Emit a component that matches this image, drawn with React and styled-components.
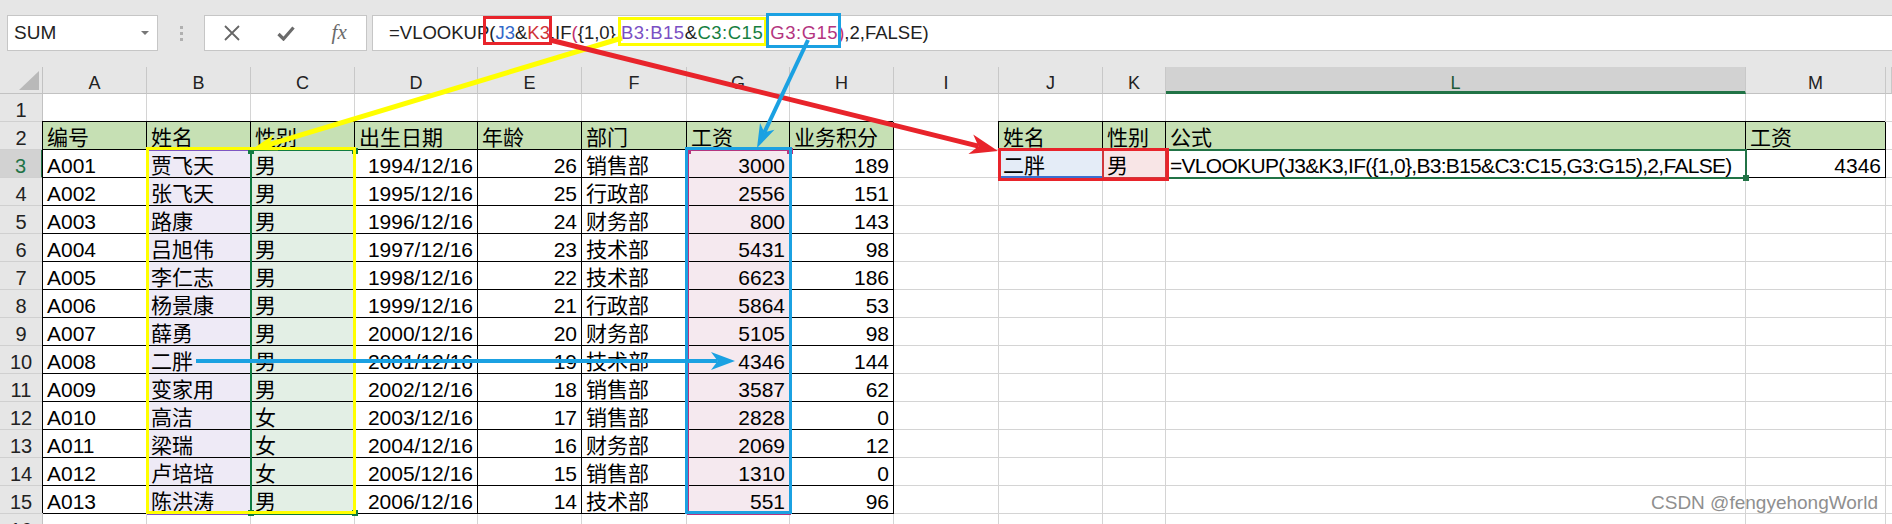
import React from 'react';
import styled, { createGlobalStyle } from 'styled-components';

const GlobalStyle = createGlobalStyle`
  html, body { margin: 0; padding: 0; background: #fff; }
  body {
    width: 1892px; height: 524px; overflow: hidden;
    font-family: "Liberation Sans", "Noto Sans CJK SC", sans-serif;
  }
`;

const COLS = [43, 104, 104, 104, 123, 104, 105, 103, 104, 105, 104, 63, 580, 140, 6];
const LETTERS = ['', 'A', 'B', 'C', 'D', 'E', 'F', 'G', 'H', 'I', 'J', 'K', 'L', 'M', ''];

const HEAD = ['编号', '姓名', '性别', '出生日期', '年龄', '部门', '工资', '业务积分'];
const DATA = [
  ['A001', '贾飞天', '男', '1994/12/16', 26, '销售部', 3000, 189],
  ['A002', '张飞天', '男', '1995/12/16', 25, '行政部', 2556, 151],
  ['A003', '路康', '男', '1996/12/16', 24, '财务部', 800, 143],
  ['A004', '吕旭伟', '男', '1997/12/16', 23, '技术部', 5431, 98],
  ['A005', '李仁志', '男', '1998/12/16', 22, '技术部', 6623, 186],
  ['A006', '杨景康', '男', '1999/12/16', 21, '行政部', 5864, 53],
  ['A007', '薛勇', '男', '2000/12/16', 20, '财务部', 5105, 98],
  ['A008', '二胖', '男', '2001/12/16', 19, '技术部', 4346, 144],
  ['A009', '变家用', '男', '2002/12/16', 18, '销售部', 3587, 62],
  ['A010', '高洁', '女', '2003/12/16', 17, '销售部', 2828, 0],
  ['A011', '梁瑞', '女', '2004/12/16', 16, '财务部', 2069, 12],
  ['A012', '卢培培', '女', '2005/12/16', 15, '销售部', 1310, 0],
  ['A013', '陈洪涛', '男', '2006/12/16', 14, '技术部', 551, 96],
];
const RIGHT = [false, false, false, true, true, false, true, true];
// tints keyed by column number (A = 1)
const TINT = { 2: '#eeeaf6', 3: '#e3efe5', 7: '#f5e9ef' };
const FORMULA = '=VLOOKUP(J3&K3,IF({1,0},B3:B15&C3:C15,G3:G15),2,FALSE)';

// formula bar pieces: text, colour, is it a range, extra gap before
const PIECES = [
  ['=VLOOKUP(', null],
  ['J3', '#3467c8'],
  ['&', null],
  ['K3', '#cf3238'],
  [',IF', null],
  ['(', '#c2306f'],
  ['{1,0},', null],
  ['B3:B15', '#7a4fc4', true],
  ['&', null, true],
  ['C3:C15', '#16803f', true],
  [',', null],
  ['G3:G15', '#b4357f', true, true],
  [')', '#c2306f'],
  [',2,FALSE)', null],
];

const Frame = styled.div`
  position: relative;
  width: 1892px;
  height: 524px;
  overflow: hidden;
  background: #fff;
`;

const TopBar = styled.div`
  height: 67px;
  box-sizing: border-box;
  padding: 15px 0 0 7px;
  background: #e6e6e6;
  display: flex;
  align-items: flex-start;
`;

const NameBox = styled.div`
  width: 151px;
  height: 36px;
  box-sizing: border-box;
  background: #fff;
  border: 1px solid #c6c6c6;
  display: flex;
  align-items: center;
  justify-content: space-between;
  padding: 0 8px 0 6px;
  font-size: 19px;
  color: #222;
`;

const Caret = styled.span`
  width: 0;
  height: 0;
  border-left: 4px solid transparent;
  border-right: 4px solid transparent;
  border-top: 4px solid #777;
`;

const Grip = styled.div`
  width: 46px;
  height: 36px;
  display: flex;
  flex-direction: column;
  align-items: center;
  justify-content: center;
  gap: 3px;
  span { width: 3px; height: 3px; background: #b0b0b0; }
`;

const FxGroup = styled.div`
  width: 163px;
  height: 36px;
  box-sizing: border-box;
  margin-right: 5px;
  background: #fff;
  border: 1px solid #c6c6c6;
  display: flex;
`;

const FxBtn = styled.div`
  flex: 1;
  display: flex;
  align-items: center;
  justify-content: center;
  color: #6b6b6b;
`;

const FxText = styled.span`
  font-family: "Liberation Serif", serif;
  font-style: italic;
  font-size: 21px;
  color: #6b6b6b;
  margin-top: -2px;
`;

const FormulaBox = styled.div`
  flex: 1;
  height: 36px;
  box-sizing: border-box;
  background: #fff;
  border: 1px solid #c6c6c6;
  border-right: none;
  padding-left: 16px;
  font-size: 18.5px;
  line-height: 34px;
  color: #222;
  white-space: pre;
`;

const Ref = styled.span`
  color: ${p => p.$c || '#222'};
  letter-spacing: ${p => (p.$range ? '0.5px' : '0')};
  margin-left: ${p => (p.$gap ? '2px' : '0')};
`;

const Sheet = styled.div`
  display: grid;
  grid-template-columns: ${COLS.map(c => c + 'px').join(' ')};
  grid-template-rows: 27px;
  grid-auto-rows: 28px;
`;

const Corner = styled.div`
  background: #e6e6e6;
  border-right: 1px solid #c2c2c2;
  border-bottom: 1px solid #c2c2c2;
  box-sizing: border-box;
  display: flex;
  align-items: flex-end;
  justify-content: flex-end;
  padding: 0 3px 3px 0;
  span {
    width: 0; height: 0;
    border-left: 20px solid transparent;
    border-bottom: 19px solid #b9b9b9;
  }
`;

const ColHead = styled.div`
  box-sizing: border-box;
  height: 27px;
  padding-top: 3px;
  background: ${p => (p.$active ? '#d2d2d2' : '#e6e6e6')};
  border-right: 1px solid #c8c8c8;
  border-bottom: ${p => (p.$active ? '3px solid #217346' : '1px solid #c2c2c2')};
  text-align: center;
  font-size: 18px;
  line-height: 27px;
  color: ${p => (p.$active ? '#1d5a37' : '#222')};
`;

const RowHead = styled.div`
  box-sizing: border-box;
  height: 28px;
  padding-top: 2px;
  background: ${p => (p.$active ? '#d2d2d2' : '#e6e6e6')};
  border-right: ${p => (p.$active ? '2px solid #217346' : '1px solid #c2c2c2')};
  border-bottom: 1px solid #d0d0d0;
  text-align: center;
  font-size: 20px;
  line-height: 28px;
  color: ${p => (p.$active ? '#217346' : '#222')};
`;

const Cell = styled.div`
  box-sizing: border-box;
  height: 28px;
  padding: 2px 4px 0;
  background: ${p => p.$bg || '#fff'};
  border-right: 1px solid ${p => (p.$boxed ? '#000' : '#d4d4d4')};
  border-bottom: 1px solid ${p => (p.$boxed ? '#000' : '#d4d4d4')};
  box-shadow: ${p => (p.$boxed ? '-1px -1px 0 #000' : 'none')};
  text-align: ${p => (p.$right ? 'right' : 'left')};
  font-size: 21px;
  line-height: 28px;
  letter-spacing: ${p => p.$tight || 0};
  color: #000;
  white-space: nowrap;
`;

const Overlay = styled.svg`
  position: absolute;
  left: 0;
  top: 0;
  pointer-events: none;
`;

const Watermark = styled.div`
  position: absolute;
  right: 14px;
  bottom: 10px;
  font-size: 19px;
  color: #8f8f8f;
  text-shadow: 0 0 1px #fff;
`;

function Arrow({ from, to, color, width, head = 26, half = 9 }) {
  const [x1, y1] = from;
  const [x2, y2] = to;
  const len = Math.hypot(x2 - x1, y2 - y1);
  const ux = (x2 - x1) / len;
  const uy = (y2 - y1) / len;
  const px = -uy;
  const py = ux;
  const bx = x2 - ux * head;
  const by = y2 - uy * head;
  const nx = x2 - ux * head * 0.72;
  const ny = y2 - uy * head * 0.72;
  const pts = [
    [x2, y2],
    [bx + px * half, by + py * half],
    [nx, ny],
    [bx - px * half, by - py * half],
  ].map(p => p.join(',')).join(' ');
  return (
    <g>
      <line x1={x1} y1={y1} x2={nx} y2={ny} stroke={color} strokeWidth={width} />
      <polygon points={pts} fill={color} />
    </g>
  );
}

function Handle({ x, y, c }) {
  return <rect x={x - 3} y={y - 3} width={6} height={6} fill={c} />;
}

function Annotations() {
  return (
    <Overlay width="1892" height="524" viewBox="0 0 1892 524">
      {/* excel reference highlights */}
      <rect x="148" y="150" width="103" height="364" fill="none" stroke="#7e57c2" strokeWidth="2" />
      <rect x="251" y="150" width="104" height="364" fill="none" stroke="#107c41" strokeWidth="2" />
      <rect x="688" y="150" width="102" height="364" fill="none" stroke="#b4357f" strokeWidth="2" />
      <line x1="1000" y1="177" x2="1102" y2="177" stroke="#3a6fd0" strokeWidth="2" />
      <rect x="1103" y="150" width="63" height="28" fill="none" stroke="#d0373c" strokeWidth="2" />
      <rect x="1167" y="150" width="579" height="28" fill="none" stroke="#217346" strokeWidth="2" />
      <Handle x={1746} y={178} c="#217346" />
      <Handle x={251} y={151} c="#107c41" />
      <Handle x={355} y={151} c="#107c41" />
      <Handle x={251} y={513} c="#107c41" />
      <Handle x={355} y={513} c="#107c41" />
      <Handle x={688} y={151} c="#b4357f" />
      <Handle x={790} y={151} c="#b4357f" />

      {/* annotation boxes */}
      <rect x="147.5" y="148.5" width="207" height="364" fill="none" stroke="#ffff00" strokeWidth="3" />
      <rect x="686.5" y="148.5" width="104" height="364" fill="none" stroke="#1ba1e2" strokeWidth="3" />
      <rect x="999.5" y="149.5" width="168" height="30" fill="none" stroke="#e8242b" strokeWidth="3" />
      <rect x="484.5" y="17.5" width="66" height="26" fill="none" stroke="#e8242b" strokeWidth="3" />
      <rect x="619.5" y="18.5" width="146" height="26" fill="none" stroke="#ffff00" strokeWidth="3" />
      <rect x="767.5" y="14.5" width="72" height="32" fill="none" stroke="#1ba1e2" strokeWidth="3" />

      {/* arrows */}
      <Arrow from={[622, 38]} to={[251, 150]} color="#ffff00" width={5} head={26} half={8} />
      <Arrow from={[550, 40]} to={[998, 151]} color="#e8242b" width={5} head={28} half={10} />
      <Arrow from={[808, 40]} to={[757, 148]} color="#1ba1e2" width={4} head={24} half={8} />
      <Arrow from={[196, 361]} to={[735, 361]} color="#1ba1e2" width={4} head={24} half={9} />
    </Overlay>
  );
}

function FormulaText() {
  return (
    <FormulaBox>
      {PIECES.map(([t, c, range, gap], i) => (
        <Ref key={i} $c={c} $range={range} $gap={gap}>{t}</Ref>
      ))}
    </FormulaBox>
  );
}

function rowCells(r) {
  const cells = [];
  for (let c = 1; c <= 14; c++) {
    const key = `${r}-${c}`;
    let text = '';
    let boxed = false;
    let bg;
    let right = false;
    let tight;
    if (r === 2 && c <= 8) {
      text = HEAD[c - 1];
      boxed = true;
      bg = '#c6e0b4';
    } else if (r >= 3 && r <= 15 && c <= 8) {
      text = DATA[r - 3][c - 1];
      boxed = true;
      right = RIGHT[c - 1];
      bg = TINT[c];
    } else if (r === 2 && c >= 10 && c <= 13) {
      text = ['姓名', '性别', '公式', '工资'][c - 10];
      boxed = true;
      bg = '#c6e0b4';
    } else if (r === 3 && c >= 10 && c <= 13) {
      boxed = true;
      if (c === 10) { text = '二胖'; bg = '#e4ecf7'; }
      if (c === 11) { text = '男'; bg = '#f8e5e6'; }
      if (c === 12) { text = FORMULA; tight = '-0.7px'; }
      if (c === 13) { text = '4346'; right = true; }
    }
    cells.push(
      <Cell key={key} $boxed={boxed} $bg={bg} $right={right} $tight={tight}>
        {text}
      </Cell>
    );
  }
  return cells;
}

export default function App() {
  const rows = [];
  for (let r = 1; r <= 16; r++) {
    rows.push(
      <React.Fragment key={r}>
        <RowHead $active={r === 3}>{r}</RowHead>
        {rowCells(r)}
      </React.Fragment>
    );
  }
  return (
    <Frame>
      <GlobalStyle />
      <TopBar>
        <NameBox>
          <span>SUM</span>
          <Caret />
        </NameBox>
        <Grip>
          <span /><span /><span />
        </Grip>
        <FxGroup>
          <FxBtn>
            <svg width="16" height="16" viewBox="0 0 16 16">
              <path d="M1 1 L15 15 M15 1 L1 15" stroke="#666" strokeWidth="1.8" />
            </svg>
          </FxBtn>
          <FxBtn>
            <svg width="18" height="15" viewBox="0 0 18 15">
              <path d="M1.5 8 L6.5 13 L16.5 1.5" stroke="#6b6b6b" strokeWidth="3.2" fill="none" />
            </svg>
          </FxBtn>
          <FxBtn>
            <FxText>fx</FxText>
          </FxBtn>
        </FxGroup>
        <FormulaText />
      </TopBar>
      <Sheet>
        <Corner><span /></Corner>
        {LETTERS.slice(1).map((l, i) => (
          <ColHead key={i} $active={l === 'L'}>{l}</ColHead>
        ))}
        {rows}
      </Sheet>
      <Annotations />
      <Watermark>CSDN @fengyehongWorld</Watermark>
    </Frame>
  );
}
